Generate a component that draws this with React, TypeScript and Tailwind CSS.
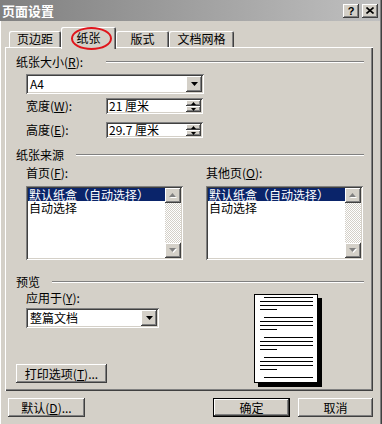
const raised =
  "shadow-[inset_-1px_-1px_#404040,inset_1px_1px_#ffffff,inset_-2px_-2px_#808080,inset_2px_2px_#d4d0c8]";
const sunken =
  "shadow-[inset_1px_1px_#808080,inset_-1px_-1px_#ffffff,inset_2px_2px_#404040,inset_-2px_-2px_#d4d0c8]";

const Key = ({ k }: { k: string }) => (
  <span>
    (<span className="underline">{k}</span>)
  </span>
);

const GroupTitle = ({
  children,
  labelClass,
  className = "",
}: {
  children: React.ReactNode;
  labelClass: string;
  className?: string;
}) => (
  <div className={`flex h-[12px] items-center ${className}`}>
    <div className={`shrink-0 whitespace-nowrap ${labelClass}`}>{children}</div>
    <div className="h-[2px] flex-1 border-t border-b border-t-[#808080] border-b-white" />
  </div>
);

const DownArrow = () => (
  <svg width="7" height="4" viewBox="0 0 7 4">
    <polygon points="0,0 7,0 3.5,4" fill="#000" />
  </svg>
);

const Combo = ({ text, widthClass }: { text: string; widthClass: string }) => (
  <div className={`flex h-[20px] items-center bg-white p-[2px] ${widthClass} ${sunken}`}>
    <span className="flex-1 pl-[2px] whitespace-nowrap">{text}</span>
    <div className={`flex h-[16px] w-[16px] items-center justify-center bg-[#d4d0c8] ${raised}`}>
      <DownArrow />
    </div>
  </div>
);

const SpinBtn = ({ up }: { up?: boolean }) => (
  <div className={`flex h-[6px] w-[15px] items-center justify-center bg-[#d4d0c8] ${raised}`}>
    <svg width="5" height="3" viewBox="0 0 5 3">
      <polygon points={up ? "2.5,0 5,3 0,3" : "0,0 5,0 2.5,3"} fill="#000" />
    </svg>
  </div>
);

const Spin = ({ text }: { text: string }) => (
  <div className={`flex h-[16px] w-[97px] items-center bg-white p-[2px] ${sunken}`}>
    <span className="flex-1 pl-[1px] whitespace-nowrap">{text}</span>
    <div className="flex flex-col">
      <SpinBtn up />
      <SpinBtn />
    </div>
  </div>
);

const ScrollBtn = ({ up }: { up?: boolean }) => (
  <div className={`flex h-[15px] w-[16px] items-center justify-center bg-[#d4d0c8] ${raised}`}>
    <svg width="8" height="5" viewBox="0 0 8 5">
      <polygon points={up ? "4.5,1 8,5 1,5" : "1,1 8,1 4.5,5"} fill="#ffffff" />
      <polygon points={up ? "3.5,0 7,4 0,4" : "0,0 7,0 3.5,4"} fill="#808080" />
    </svg>
  </div>
);

const ListBox = () => (
  <div className={`flex h-[74px] w-[157px] bg-white p-[2px] ${sunken}`}>
    <div className="flex-1">
      <div className="flex h-[13px] items-center bg-[#0a246a] pl-[1px] whitespace-nowrap text-white">
        默认纸盒（自动选择）
      </div>
      <div className="flex h-[13px] items-center pl-[1px]">自动选择</div>
    </div>
    <div className="flex w-[16px] flex-col bg-[repeating-conic-gradient(#d4d0c8_0_25%,#ffffff_0_50%)] bg-[length:2px_2px]">
      <ScrollBtn up />
      <div className="flex-1" />
      <ScrollBtn />
    </div>
  </div>
);

const Button = ({
  children,
  widthClass,
  isDefault,
}: {
  children: React.ReactNode;
  widthClass: string;
  isDefault?: boolean;
}) => (
  <div
    className={`flex h-[19px] items-center justify-center bg-[#d4d0c8] whitespace-nowrap ${widthClass} ${
      isDefault
        ? "shadow-[inset_0_0_0_1px_#000000,inset_-2px_-2px_#404040,inset_2px_2px_#ffffff,inset_-3px_-3px_#808080]"
        : raised
    }`}
  >
    {children}
  </div>
);

const PreviewPage = () => {
  const paras = [0, 20, 40, 60];
  return (
    <svg width="68" height="93" viewBox="0 0 68 93">
      <rect x="4" y="4" width="64" height="89" fill="#000" />
      <rect x="0.5" y="0.5" width="63" height="88" fill="#fff" stroke="#000" />
      {paras.map((o) => (
        <g key={o} stroke="#000" strokeWidth="1">
          <line x1="10" y1={3.5 + o} x2="59" y2={3.5 + o} />
          <line x1="6" y1={7.5 + o} x2="59" y2={7.5 + o} />
          <line x1="6" y1={11.5 + o} x2="59" y2={11.5 + o} />
          <line x1="6" y1={15.5 + o} x2="23" y2={15.5 + o} />
        </g>
      ))}
      <line x1="10" y1="83.5" x2="59" y2="83.5" stroke="#000" />
    </svg>
  );
};

const Tab = ({
  children,
  widthClass,
  selected,
}: {
  children: React.ReactNode;
  widthClass: string;
  selected?: boolean;
}) => (
  <div
    className={`flex items-start justify-center bg-[#d4d0c8] rounded-t-[2px] shadow-[inset_1px_1px_#ffffff,inset_-1px_0_#404040,inset_-2px_0_#808080] ${widthClass} ${
      selected ? "relative z-10 -mb-[2px] h-[22px] pt-[5px]" : "h-[16px] pt-[2px]"
    }`}
  >
    {children}
  </div>
);

export default function App() {
  return (
    <div className="relative h-[424px] w-[382px] overflow-hidden bg-[#d4d0c8] font-['SimSun','Noto_Sans_CJK_SC',sans-serif] text-[12px] leading-[12px] text-black shadow-[inset_1px_0_#ffffff,inset_-1px_0_#404040,inset_-2px_0_#808080]">
      {/* title bar */}
      <div className="mr-[2px] flex h-[21px] items-center bg-gradient-to-r from-[#808080] to-[#c0c0c0] pl-[2px] pr-[2px]">
        <span className="text-[13px] font-bold text-white">页面设置</span>
        <div className="ml-auto flex gap-[3px]">
          <div className={`flex h-[14px] w-[16px] items-center justify-center bg-[#d4d0c8] text-[11px] font-bold font-['Liberation_Sans',sans-serif] ${raised}`}>
            ?
          </div>
          <div className={`flex h-[14px] w-[16px] items-center justify-center bg-[#d4d0c8] ${raised}`}>
            <svg width="8" height="7" viewBox="0 0 8 7">
              <path d="M0.5 0.5L7.5 6.5M7.5 0.5L0.5 6.5" stroke="#000" strokeWidth="1.6" />
            </svg>
          </div>
        </div>
      </div>

      {/* tabs */}
      <div className="flex h-[26px] items-end pl-[9px]">
        <Tab widthClass="w-[52px]">页边距</Tab>
        <Tab widthClass="w-[55px]" selected>
          纸张
        </Tab>
        <Tab widthClass="w-[53px]">版式</Tab>
        <Tab widthClass="w-[65px]">文档网格</Tab>
      </div>

      {/* panel */}
      <div className="ml-[5px] h-[344px] w-[368px] pt-[9px] pl-[11px] pr-[9px] shadow-[inset_1px_1px_#ffffff,inset_-1px_-1px_#404040,inset_-2px_-2px_#808080]">
        <GroupTitle labelClass="w-[90px]">
          纸张大小<Key k="R" />:
        </GroupTitle>
        <div className="mt-[6px] ml-[10px]">
          <Combo text="A4" widthClass="w-[178px]" />
        </div>
        <div className="mt-[4px] ml-[10px] flex items-center">
          <div className="w-[80px]">
            宽度<Key k="W" />:
          </div>
          <Spin text="21 厘米" />
        </div>
        <div className="mt-[8px] ml-[10px] flex items-center">
          <div className="w-[80px]">
            高度<Key k="E" />:
          </div>
          <Spin text="29.7 厘米" />
        </div>

        <GroupTitle labelClass="w-[60px]" className="mt-[11px]">
          纸张来源
        </GroupTitle>
        <div className="mt-[6px] ml-[10px] flex">
          <div className="w-[180px]">
            <div>
              首页<Key k="F" />:
            </div>
            <div className="mt-[7px]">
              <ListBox />
            </div>
          </div>
          <div>
            <div>
              其他页<Key k="O" />:
            </div>
            <div className="mt-[7px]">
              <ListBox />
            </div>
          </div>
        </div>

        <GroupTitle labelClass="w-[36px]" className="mt-[16px]">
          预览
        </GroupTitle>
        <div className="flex">
          <div className="w-[238px]">
            <div className="mt-[4px] ml-[10px]">
              应用于<Key k="Y" />:
            </div>
            <div className="mt-[4px] ml-[10px]">
              <Combo text="整篇文档" widthClass="w-[133px]" />
            </div>
            <div className="mt-[36px]">
              <Button widthClass="w-[91px]">
                打印选项<Key k="T" />...
              </Button>
            </div>
          </div>
          <div className="mt-[6px]">
            <PreviewPage />
          </div>
        </div>
      </div>

      {/* bottom buttons */}
      <div className="mt-[7px] flex pl-[8px] pr-[9px]">
        <Button widthClass="w-[77px]">
          默认<Key k="D" />...
        </Button>
        <div className="ml-auto flex gap-[8px]">
          <Button widthClass="w-[77px]" isDefault>
            确定
          </Button>
          <Button widthClass="w-[75px]">取消</Button>
        </div>
      </div>

      {/* red annotation ellipse */}
      <div className="absolute top-[27px] left-[71px] z-20 h-[23px] w-[41px] rounded-[50%] border-2 border-[#e0141b]" />
    </div>
  );
}
